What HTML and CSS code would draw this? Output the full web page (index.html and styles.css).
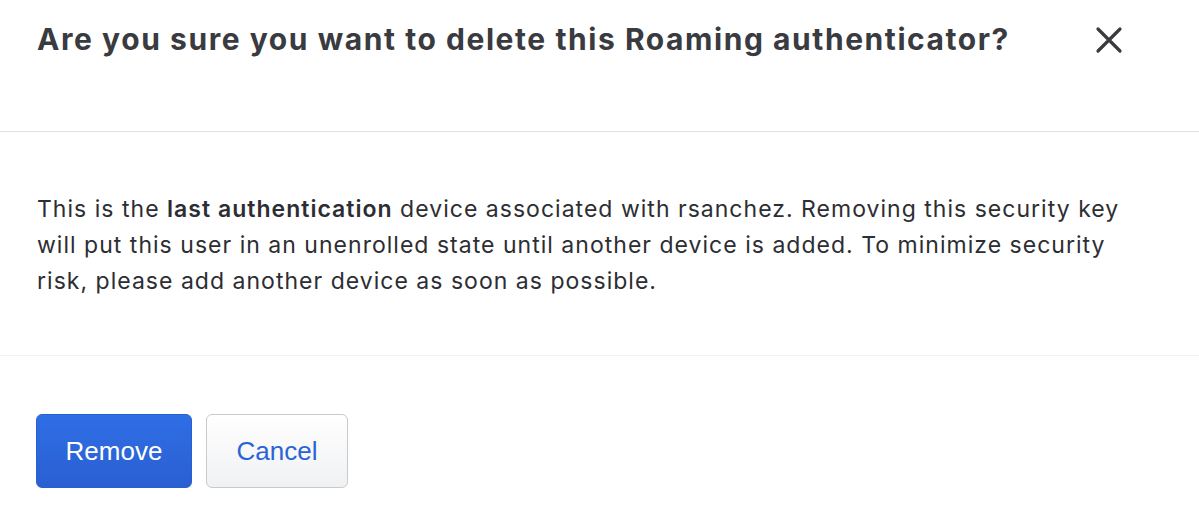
FILE: index.html
```html
<!DOCTYPE html>
<html>
<head>
<meta charset="utf-8">
<link rel="stylesheet" href="styles.css">
</head>
<body>
<div class="dialog">
  <header class="dialog-header">
    <h1 class="dialog-title">Are you sure you want to delete this Roaming authenticator?</h1>
    <button class="close-btn" aria-label="Close">
      <svg width="28" height="28" viewBox="0 0 28 28"><path d="M3 3 L25 25 M25 3 L3 25" stroke="#3a3b40" stroke-width="3.2" stroke-linecap="round" fill="none"/></svg>
    </button>
  </header>
  <section class="dialog-body">
    <p>This is the <strong>last authentication</strong> device associated with rsanchez. Removing this security key will put this user in an unenrolled state until another device is added. To minimize security risk, please add another device as soon as possible.</p>
  </section>
  <footer class="dialog-footer">
    <button class="btn btn-primary">Remove</button>
    <button class="btn btn-secondary">Cancel</button>
  </footer>
</div>
</body>
</html>
```

FILE: styles.css
```css
html, body {
  margin: 0;
  padding: 0;
  background: #ffffff;
}
.dialog {
  width: 1199px;
  font-family: Inter, "Noto Sans", sans-serif;
}
.dialog-header {
  height: 132px;
  box-sizing: border-box;
  border-bottom: 1px solid #e1e1e1;
  display: flex;
  align-items: flex-start;
  justify-content: space-between;
  padding: 19px 76px 0 37px;
}
.dialog-title {
  margin: 0;
  font-size: 30px;
  line-height: 40px;
  font-weight: 700;
  color: #3a3b40;
  letter-spacing: 1.56px;
  white-space: nowrap;
}
.close-btn {
  background: none;
  border: 0;
  padding: 0;
  margin-top: 7px;
  width: 28px;
  height: 28px;
  cursor: pointer;
}
.dialog-body {
  height: 224px;
  box-sizing: border-box;
  border-bottom: 1px solid #f2f2f2;
  padding: 59px 65px 0 37px;
}
.dialog-body p {
  margin: 0;
  font-size: 23px;
  line-height: 36px;
  letter-spacing: 1.02px;
  color: #2c2e33;
}
.dialog-body strong {
  font-weight: 600;
}
.dialog-footer {
  display: flex;
  gap: 14px;
  padding: 58px 0 0 36px;
}
.btn {
  height: 74px;
  border-radius: 6px;
  font-family: "Liberation Sans", Arial, sans-serif;
  font-size: 26px;
  padding: 0;
  cursor: pointer;
}
.btn-primary {
  width: 156px;
  color: #ffffff;
  border: 1px solid #2a5fce;
  background: linear-gradient(#2f6ee6, #2a5fd1);
}
.btn-secondary {
  width: 142px;
  color: #2a64d6;
  border: 1px solid #c9cacd;
  background: linear-gradient(#ffffff, #f0f1f3);
}
```
